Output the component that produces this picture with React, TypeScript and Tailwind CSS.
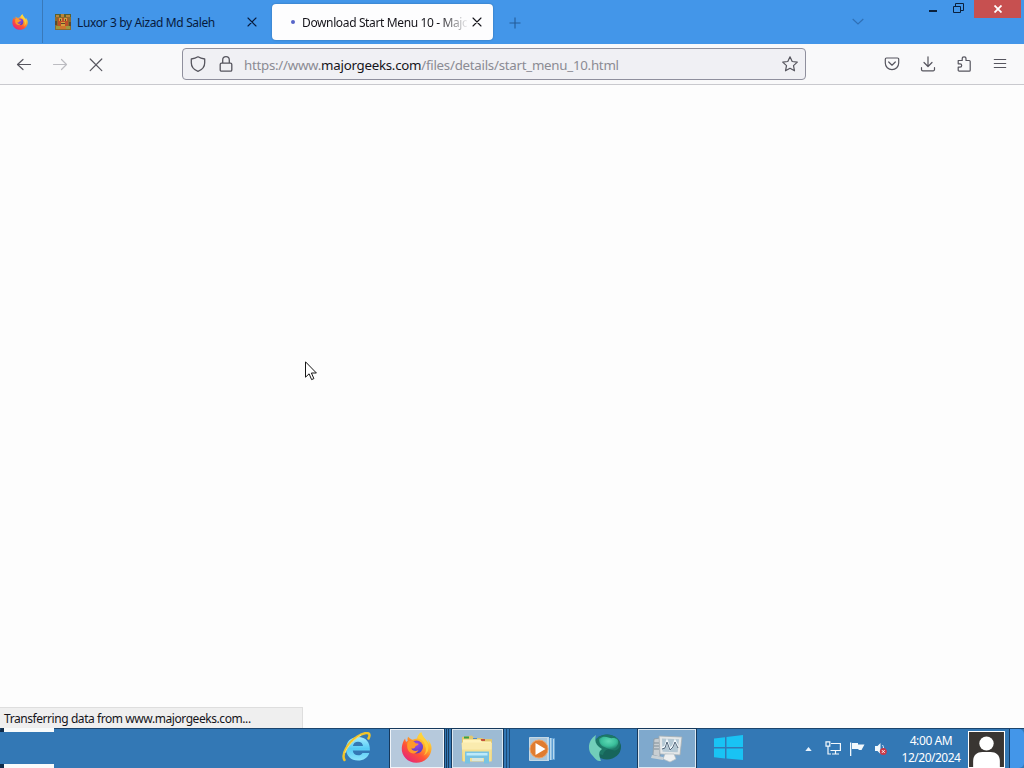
import React from 'react';

interface IconProps {
  className?: string;
}

function FirefoxLogo({ className }: IconProps) {
  return (
    <svg viewBox="0 0 32 32" className={className}>
      <defs>
        <linearGradient id="fox" x1="0.85" y1="0.05" x2="0.2" y2="0.95">
          <stop offset="0" stopColor="#fff04a" />
          <stop offset="0.35" stopColor="#ffab28" />
          <stop offset="0.65" stopColor="#ff5336" />
          <stop offset="1" stopColor="#e6267a" />
        </linearGradient>
        <radialGradient id="globe" cx="0.5" cy="0.3" r="0.8">
          <stop offset="0" stopColor="#a04bea" />
          <stop offset="1" stopColor="#4a3bb8" />
        </radialGradient>
      </defs>
      <path
        fill="url(#fox)"
        d="M30.5 12c-.7-1.700-2-3.400-3.100-4 .8 1.700 1.300 3.300 1.500 4.500C27.300 8.500 24.500 7 22.300 3.500 21.500 2.200 21 1 21 .3c-2.700 1.500-4 4.400-4.200 6.300-1.700.1-3.300.6-4.700 1.400-2.200-.6-3.500-1.600-4.600-3.100-.8.9-.9 2.500-.6 4.100C5 11 5 10 4.200 6.700 2.500 9 1.200 12.500.8 16 .2 25 7 31.600 15.800 31.700c8.500 0 15-6.300 15.700-14.200.2-2-.2-3.800-1-5.500z"
      />
      <circle cx="16" cy="15.500" r="6.700" fill="url(#globe)" />
      <path fill="#ff9a2a" d="M7 10c3-1.500 6-1 8 1.500 1.300.3 3 .2 3.200.8-.3 1.400-3.200 1.500-3.600 3.200-.3 1.500-2.500 1.800-4 1.500 1 2.500 4.500 3.500 7.500 1.700-2 4.300-7.600 4.600-10.300 1C6.200 17 5.800 13 7 10z" />
      <path fill="#ffd23c" opacity="0.8" d="M21 .3c-2.700 1.500-4 4.400-4.200 6.300 5 .3 8 4 8 8.200 1.700 2.500 1 7-1.500 9.500 5-2.500 6.200-8 4-12.500C25.500 8 22 6 21 .3z" />
    </svg>
  );
}

function GameFavicon() {
  return (
    <svg viewBox="0 0 16 16" className="h-4 w-4 shrink-0">
      <rect width="16" height="16" fill="#8c6a2e" />
      <rect width="16" height="3" fill="#59602f" />
      <path fill="#b98438" d="M1 1h3v2H1zM6 0h3v3H6zM11 1h4v2h-4z" />
      <path fill="#bd5029" d="M3 4h10v8H3z" />
      <path fill="#d3a03d" d="M4 4h3v3H4zM9 4h3v3H9zM6 8h4v4H6z" />
      <path fill="#5b4a2d" d="M5 5h1v2H5zM10 5h1v2h-1zM6 9h4v1H6zM0 7h2v4H0zM14 8h2v4h-2z" />
      <path fill="#9c9a40" d="M1 12h4v3H1zM11 12h4v3h-4z" />
      <path fill="#cd7730" d="M5 12h6v3H5z" />
    </svg>
  );
}

function Cross({ className }: IconProps) {
  return (
    <svg viewBox="0 0 10 10" className={className} fill="none" stroke="currentColor" strokeWidth="1.100" strokeLinecap="round">
      <path d="M1 1l8 8M9 1L1 9" />
    </svg>
  );
}

function TabStrip() {
  return (
    <div className="flex h-[44px] bg-[#4396e9] text-[12px] text-[#071a3c]">
      <div className="flex h-[43px] w-[43px] shrink-0 items-center border-r border-[#3979ba] pl-[12px]">
        <FirefoxLogo className="h-4 w-4" />
      </div>
      <div className="flex h-[44px] w-[229px] shrink-0 items-center pl-[12px]">
        <GameFavicon />
        <span className="ml-[6px] w-[164px] pt-[2px] whitespace-nowrap tracking-[-0.370px]">Luxor 3 by Aizad Md Saleh</span>
        <Cross className="ml-[6px] h-[10px] w-[10px]" />
      </div>
      <div className="mt-[4px] flex h-[36px] w-[221px] shrink-0 items-center rounded-[4px] bg-[#fdfdfe] pl-[19px] text-[#15141a] shadow-[0_0_2px_rgba(0,0,0,0.3)]">
        <span className="h-[4px] w-[4px] rounded-full bg-[#5765c9]" />
        <span className="ml-[7px] w-[165px] overflow-hidden pt-[2px] whitespace-nowrap tracking-[-0.370px] [mask-image:linear-gradient(to_right,black_138px,transparent_167px)]">
          Download Start Menu 10 - Majo
        </span>
        <Cross className="ml-[5px] h-[10px] w-[10px]" />
      </div>
      <svg viewBox="0 0 12 12" className="mt-[17px] ml-[16px] h-3 w-3 shrink-0" stroke="#245c99" strokeWidth="1.100">
        <path d="M6 .5v11M.5 6h11" />
      </svg>
      <div className="flex-1" />
      <svg viewBox="0 0 12 8" className="mt-[18px] mr-[65px] h-[8px] w-[12px]" fill="none" stroke="#2f70b6" strokeWidth="1.200">
        <path d="M.7 1L6 6l5.300-5" />
      </svg>
      <div className="mt-[10px] h-[2px] w-[8px] bg-[#0b213d]" />
      <svg viewBox="0 0 11 11" className="mt-[3px] ml-[16px] h-[11px] w-[11px]" fill="none" stroke="#0b213d">
        <path d="M.5 3.500h7v6h-7zM2.500 3V.5h8v7H8" />
      </svg>
      <div className="ml-[10px] flex h-[18px] w-[47px] items-center justify-center bg-[#c75050]">
        <svg viewBox="0 0 8 8" className="h-[8px] w-[8px]" stroke="#fff" strokeWidth="1.800">
          <path d="M.5.5l7 7M7.500.5l-7 7" />
        </svg>
      </div>
      <div className="w-[3px]" />
    </div>
  );
}

function Toolbar() {
  return (
    <div className="flex h-[41px] items-center border-b border-[#c9c9ce] bg-[#f9f9fa] text-[#56555e]">
      <svg viewBox="0 0 16 16" className="ml-[16px] h-4 w-4" fill="none" stroke="currentColor" strokeWidth="1.200" strokeLinecap="round" strokeLinejoin="round">
        <path d="M14.500 8.500h-13M7 3.500l-5.500 5 5.500 5" />
      </svg>
      <svg viewBox="0 0 16 16" className="ml-[20px] h-4 w-4 text-[#bcbcc1]" fill="none" stroke="currentColor" strokeWidth="1.200" strokeLinecap="round" strokeLinejoin="round">
        <path d="M1.500 8.500h13M9.500 3.500l5 5-5 5" />
      </svg>
      <svg viewBox="0 0 16 16" className="ml-[20px] h-4 w-4" fill="none" stroke="currentColor" strokeWidth="1.200" strokeLinecap="round">
        <path d="M2.200 3l11.600 11.600M13.800 3L2.200 14.600" />
      </svg>
      <div className="ml-[78px] flex h-[32px] w-[624px] items-center rounded-[4px] border border-[#8f8f9d] bg-[#f0f0f4] pl-[7px]">
        <svg viewBox="0 0 16 16" className="h-4 w-4 shrink-0" fill="none" stroke="currentColor" strokeWidth="1.300" strokeLinejoin="round">
          <path d="M8 .8C6 2.100 4 2.700 1.300 3v3.700c0 4 2.500 7 6.700 8.600 4.200-1.600 6.700-4.600 6.700-8.600V3C12 2.700 10 2.100 8 .8z" />
        </svg>
        <svg viewBox="0 0 16 16" className="ml-[12px] h-4 w-4 shrink-0" fill="none" stroke="currentColor" strokeWidth="1.300">
          <rect x="2.200" y="7.200" width="11.600" height="8" rx="1.300" />
          <path d="M4.700 7V4a3.300 3.300 0 0 1 6.600 0v3" />
        </svg>
        <span className="ml-[10px] flex-1 pt-[3px] whitespace-pre text-[13.300px] tracking-[-0.260px] text-[#8b8b93]">
          https://www.<span className="text-[#15141a]">majorgeeks.com</span>/files/details/start_menu_10.html
        </span>
        <svg viewBox="0 0 16 16" className="mr-[7px] h-4 w-4 shrink-0" fill="none" stroke="currentColor" strokeWidth="1.200" strokeLinejoin="round">
          <path d="M8 .8l2.200 4.700 5.100.6-3.800 3.500 1 5.200L8 12.300l-4.500 2.500 1-5.200L.7 6.100l5.100-.6z" />
        </svg>
      </div>
      <svg viewBox="0 0 16 16" className="ml-[78px] h-4 w-4" fill="none" stroke="currentColor" strokeWidth="1.200" strokeLinecap="round" strokeLinejoin="round">
        <path d="M2.500 2h11a1.200 1.200 0 0 1 1.200 1.200V7a6.700 6.700 0 0 1-13.400 0V3.200A1.200 1.200 0 0 1 2.500 2zM4.700 6L8 9.200 11.300 6" />
      </svg>
      <svg viewBox="0 0 16 16" className="ml-[20px] h-4 w-4" fill="none" stroke="currentColor" strokeWidth="1.200" strokeLinecap="round" strokeLinejoin="round">
        <path d="M8 .8v9.500M4 6.500l4 4 4-4M1.500 11.500v2a1.300 1.300 0 0 0 1.300 1.300h10.400a1.300 1.300 0 0 0 1.300-1.300v-2" />
      </svg>
      <svg viewBox="0 0 16 16" className="ml-[20px] h-4 w-4" fill="none" stroke="currentColor" strokeWidth="1.200" strokeLinejoin="round">
        <path d="M2.200 4.500h4V2.800a1.900 1.900 0 0 1 3.800 0v1.700h3.200a1 1 0 0 1 1 1v8.700a1 1 0 0 1-1 1h-10a1 1 0 0 1-1-1v-3h1.800a1.700 1.700 0 0 0 0-3.400H2.200z" />
      </svg>
      <svg viewBox="0 0 16 16" className="ml-[20px] h-4 w-4" stroke="currentColor" strokeWidth="1.200" strokeLinecap="round">
        <path d="M2.300 3.500h11.400M2.300 7.500h11.400M2.300 11.500h11.400" />
      </svg>
    </div>
  );
}

function ExplorerLogo() {
  return (
    <svg viewBox="0 0 32 32" className="h-8 w-8">
      <defs>
        <linearGradient id="ie" x1="0" y1="0" x2="0" y2="1">
          <stop offset="0" stopColor="#a5ecff" />
          <stop offset="0.5" stopColor="#55cbf5" />
          <stop offset="1" stopColor="#8be3fc" />
        </linearGradient>
      </defs>
      <path fill="url(#ie)" fillRule="evenodd" d="M17 5C9.500 5 5 10 5 16.800 5 24 10 28.500 17 28.500c5.500 0 9.800-2.600 11.300-7.500h-6.800c-.8 1.500-2.300 2.300-4.300 2.300-3.200 0-5.200-1.800-5.400-4.800h17.100C29.200 10.200 25 5 17 5zm-5.100 9c.5-2.700 2.300-4.200 5.100-4.200s4.700 1.500 5 4.200z" />
      <path fill="none" stroke="#efc42b" strokeWidth="2.500" strokeLinecap="round" d="M3.500 28C0 22 7 10.500 16.500 4.500 23 .5 28.500-.2 28.500 3.300c0 1-.3 2-1 3.200" />
      <path fill="none" stroke="#ffe98a" strokeWidth="0.800" d="M4 21C6 15 12 8 20 3" />
    </svg>
  );
}

function FolderIcon() {
  return (
    <svg viewBox="0 0 34 32" className="h-8 w-[34px]">
      <path fill="#e2c86f" d="M2 4L12 2.500l2 2.500h8l2 1h8v22H2z" />
      <path fill="#38a144" d="M4 3.500h5v2H4z" />
      <path fill="#c5533c" d="M21 6h4v2h-4z" />
      <path fill="#4f8cc3" d="M13 5h4v1h-4z" />
      <path fill="#fff3bd" d="M3 6.500h17l2 2h9v4H3z" />
      <path fill="#f3e093" d="M1.500 10H32l-.5 18.500H3z" />
      <path fill="#faebae" d="M2 9.500h29.500v7H2z" />
      <path fill="#79c3e2" d="M5 18.500h24v12h-5V25H10v5.500H5z" />
      <path fill="#bdeafa" d="M6.500 20h21v2.500h-21z" />
      <path fill="#d9e7dd" d="M12 25h11v3H12z" />
    </svg>
  );
}

function MediaPlayerIcon() {
  return (
    <svg viewBox="0 0 28 26" className="h-[26px] w-[28px]">
      <path fill="#5d9ed4" d="M20 2h7v22h-7z" />
      <path fill="#b9d9ee" d="M19 1h2v24h-2zM22 2h1.500v22H22zM25 3h1.200v20H25z" />
      <path fill="#aac7dc" stroke="#c5d9e6" d="M1.500 1.500h18v23h-18z" />
      <circle cx="11" cy="13" r="9" fill="#e07c30" stroke="#eda369" />
      <path fill="#fff" d="M7.500 7l10 6-10 6z" />
    </svg>
  );
}

function OrbIcon() {
  return (
    <svg viewBox="0 0 34 30" className="h-[30px] w-[34px]">
      <defs>
        <radialGradient id="orb" cx="0.5" cy="0.35" r="0.65">
          <stop offset="0" stopColor="#5fd9b4" />
          <stop offset="0.6" stopColor="#3abf9b" />
          <stop offset="1" stopColor="#21806e" />
        </radialGradient>
      </defs>
      <ellipse cx="19" cy="14" rx="14" ry="12.500" fill="#17655b" />
      <path fill="#1d7867" d="M7 8c5-8 18-8 24-1 3 6-1 12-7 10-5-2-8 1-9 5C9 21 4 15 7 8z" />
      <path fill="url(#orb)" d="M11 6c6-5 10 0 14-1 4 0 6 2 5 6-2 5-6 6-9 5-5-2-10-3-10-10z" />
      <path fill="#72ceb9" d="M8 2C0 7-1 17 4 22c4 4 4 6 9 6-2-6-3-9 1-12C8 13 6 8 8 2z" />
    </svg>
  );
}

function MonitorIcon() {
  return (
    <svg viewBox="0 0 34 32" className="h-8 w-[34px]">
      <path fill="#c8ced2" stroke="#8b98a1" strokeWidth="0.800" d="M4 6l6-1v19l-7-2z" />
      <path stroke="#7f8d96" d="M4 10h5M4 13h5M4 16h5" />
      <path fill="#e4e7e8" stroke="#a5aeb4" strokeWidth="0.800" d="M9 3l23 1-2 18-20-1z" />
      <path fill="#b4c8d4" d="M12 5.500l17 .8-1.300 13-15.200-.5z" />
      <path fill="none" stroke="#f5fbff" strokeWidth="2" d="M12 15l3-1 2-6 3 8 3-3 2-5 3 6" />
      <path fill="none" stroke="#42566b" strokeWidth="0.900" d="M12 16l3-1 2-6 3 8 3-3 2-5 3 6" />
      <path fill="#eef0f0" stroke="#b3bdc3" strokeWidth="0.700" d="M15 21h9l2 5-6 3-7-3z" />
      <path fill="#c9d1d6" d="M2 22l11 2v3L1 25z" />
    </svg>
  );
}

function WindowsLogo() {
  return (
    <svg viewBox="0 0 31 26" className="h-[26px] w-[31px]" fill="#19c3f4">
      <path d="M1 3.500l11-1.300V12H1zM13.500 2L30 0v12H13.500zM1 13.500h11v10L1 22.200zM13.500 13.500H30V25l-16.500-1.500z" />
    </svg>
  );
}

function SystemTray() {
  return (
    <div className="flex h-[39px] items-center">
      <svg viewBox="0 0 8 5" className="h-[4px] w-[7px]" fill="#e8f3fd">
        <path d="M4 0l4 5H0z" />
      </svg>
      <svg viewBox="0 0 16 15" className="ml-[13px] h-[15px] w-4" fill="none" stroke="#f2f8fc" strokeWidth="1.200">
        <path d="M6 2.500h9.400v7H5.500M10.500 10v2.500M7 13h7M1 .8h3.800v4.400H1zM3 5.500V13h3" />
      </svg>
      <svg viewBox="0 0 16 16" className="ml-[8px] h-4 w-4" fill="#f2f8fc">
        <path d="M1 1.500h1.300V15H1zM3 2h6v1.500h6.500l-3 5.500H9.500V8H3z" />
      </svg>
      <svg viewBox="0 0 14 14" className="ml-[9px] h-[14px] w-[14px]">
        <path fill="#f2f8fc" d="M1 4h2.500L6.500 1v11l-3-3H1z" />
        <path fill="none" stroke="#dceaf5" d="M8.500 3c.8 1 1 2 1 3" />
        <circle cx="9.300" cy="9.500" r="3.500" fill="#c93a49" />
        <path stroke="#fff" d="M8 8.200l2.600 2.600M10.600 8.200L8 10.800" />
      </svg>
      <div className="ml-[10px] w-[66px] pt-px text-center text-[12px] leading-[17px] whitespace-nowrap text-white">
        <div className="tracking-[-0.400px]">4:00 AM</div>
        <div className="tracking-[-0.500px]">12/20/2024</div>
      </div>
      <svg viewBox="0 0 36 37" className="ml-[4px] h-[37px] w-[37px] self-end" preserveAspectRatio="none">
        <path fill="#393532" stroke="#fff" d="M.5.5h35v36H.5z" />
        <circle cx="18" cy="12.500" r="7" fill="#fff" />
        <path fill="#fff" d="M5 36v-6c0-6 4-9 9-9h8c5 0 9 3 9 9v6z" />
      </svg>
      <div className="ml-[4px] h-[39px] w-[15px] rounded-r-[5px] border-l border-[#123a66] bg-[#4396e9]" />
    </div>
  );
}

function Taskbar() {
  return (
    <div className="flex h-[40px] border-t border-[#1c456d] bg-[#3378b5]">
      <div className="-mt-px flex h-[40px] w-[54px] flex-col justify-between">
        <div className="h-[4px] rounded-tl-[3px] border-l-4 border-[#0f2c4b] bg-[#f8fbfb]" />
        <div className="h-[4px] border-l-4 border-[#0f2c4b] bg-[#f8fbfb]" />
      </div>
      <div className="ml-[287px] flex w-8 items-center pb-px">
        <ExplorerLogo />
      </div>
      <div className="ml-[17px] flex h-[39px] w-[54px] items-center justify-center border border-[#eef3f8] bg-[#b6c9dc] pr-[2px] pb-[2px] outline outline-[#16395c]">
        <FirefoxLogo className="h-[31px] w-[31px]" />
      </div>
      <div className="ml-[2px] w-[3px] border-x border-[#173b5e]" />
      <div className="ml-[3px] flex h-[39px] w-[51px] items-center justify-center border border-[#dce8f1] bg-[#9dbbd4] pr-[2px] outline outline-[#16395c]">
        <FolderIcon />
      </div>
      <div className="ml-[3px] w-[4px] border-x border-[#1d4b77]" />
      <div className="ml-[18px] flex w-[28px] items-center">
        <MediaPlayerIcon />
      </div>
      <div className="ml-[32px] flex w-[34px] items-center pb-px">
        <OrbIcon />
      </div>
      <div className="ml-[16px] flex h-[39px] w-[58px] items-center justify-center border border-[#dce8f1] bg-[#7fa9cd] outline outline-[#16395c]">
        <MonitorIcon />
      </div>
      <div className="ml-[17px] flex w-[31px] items-center pb-[2px]">
        <WindowsLogo />
      </div>
      <div className="flex-1" />
      <SystemTray />
    </div>
  );
}

export default function App() {
  return (
    <div className="relative flex h-[768px] w-[1024px] flex-col overflow-hidden bg-[#fdfdfd] font-['Noto_Sans','Open_Sans',sans-serif]">
      <TabStrip />
      <Toolbar />
      <main className="flex flex-1 items-end">
        {/* Loading status */}
        <div className="flex h-[21px] w-[303px] items-center border-t border-r border-[#dedede] bg-[#efefef] pt-[2px] pl-[4px] text-[12px] whitespace-nowrap text-[#15141a]">
          <span className="tracking-[-0.430px]">Transferring data from www.majorgeeks.com...</span>
        </div>
      </main>
      <Taskbar />

      {/* Mouse pointer */}
      <svg viewBox="0 0 12 20" className="absolute top-[361px] left-[305px] h-[20px] w-[12px]">
        <path fill="#fff" stroke="#161616" d="M.5.8v15.400l3.600-3.400 2.500 5.800 2.300-1-2.500-5.600h5z" />
      </svg>
    </div>
  );
}
